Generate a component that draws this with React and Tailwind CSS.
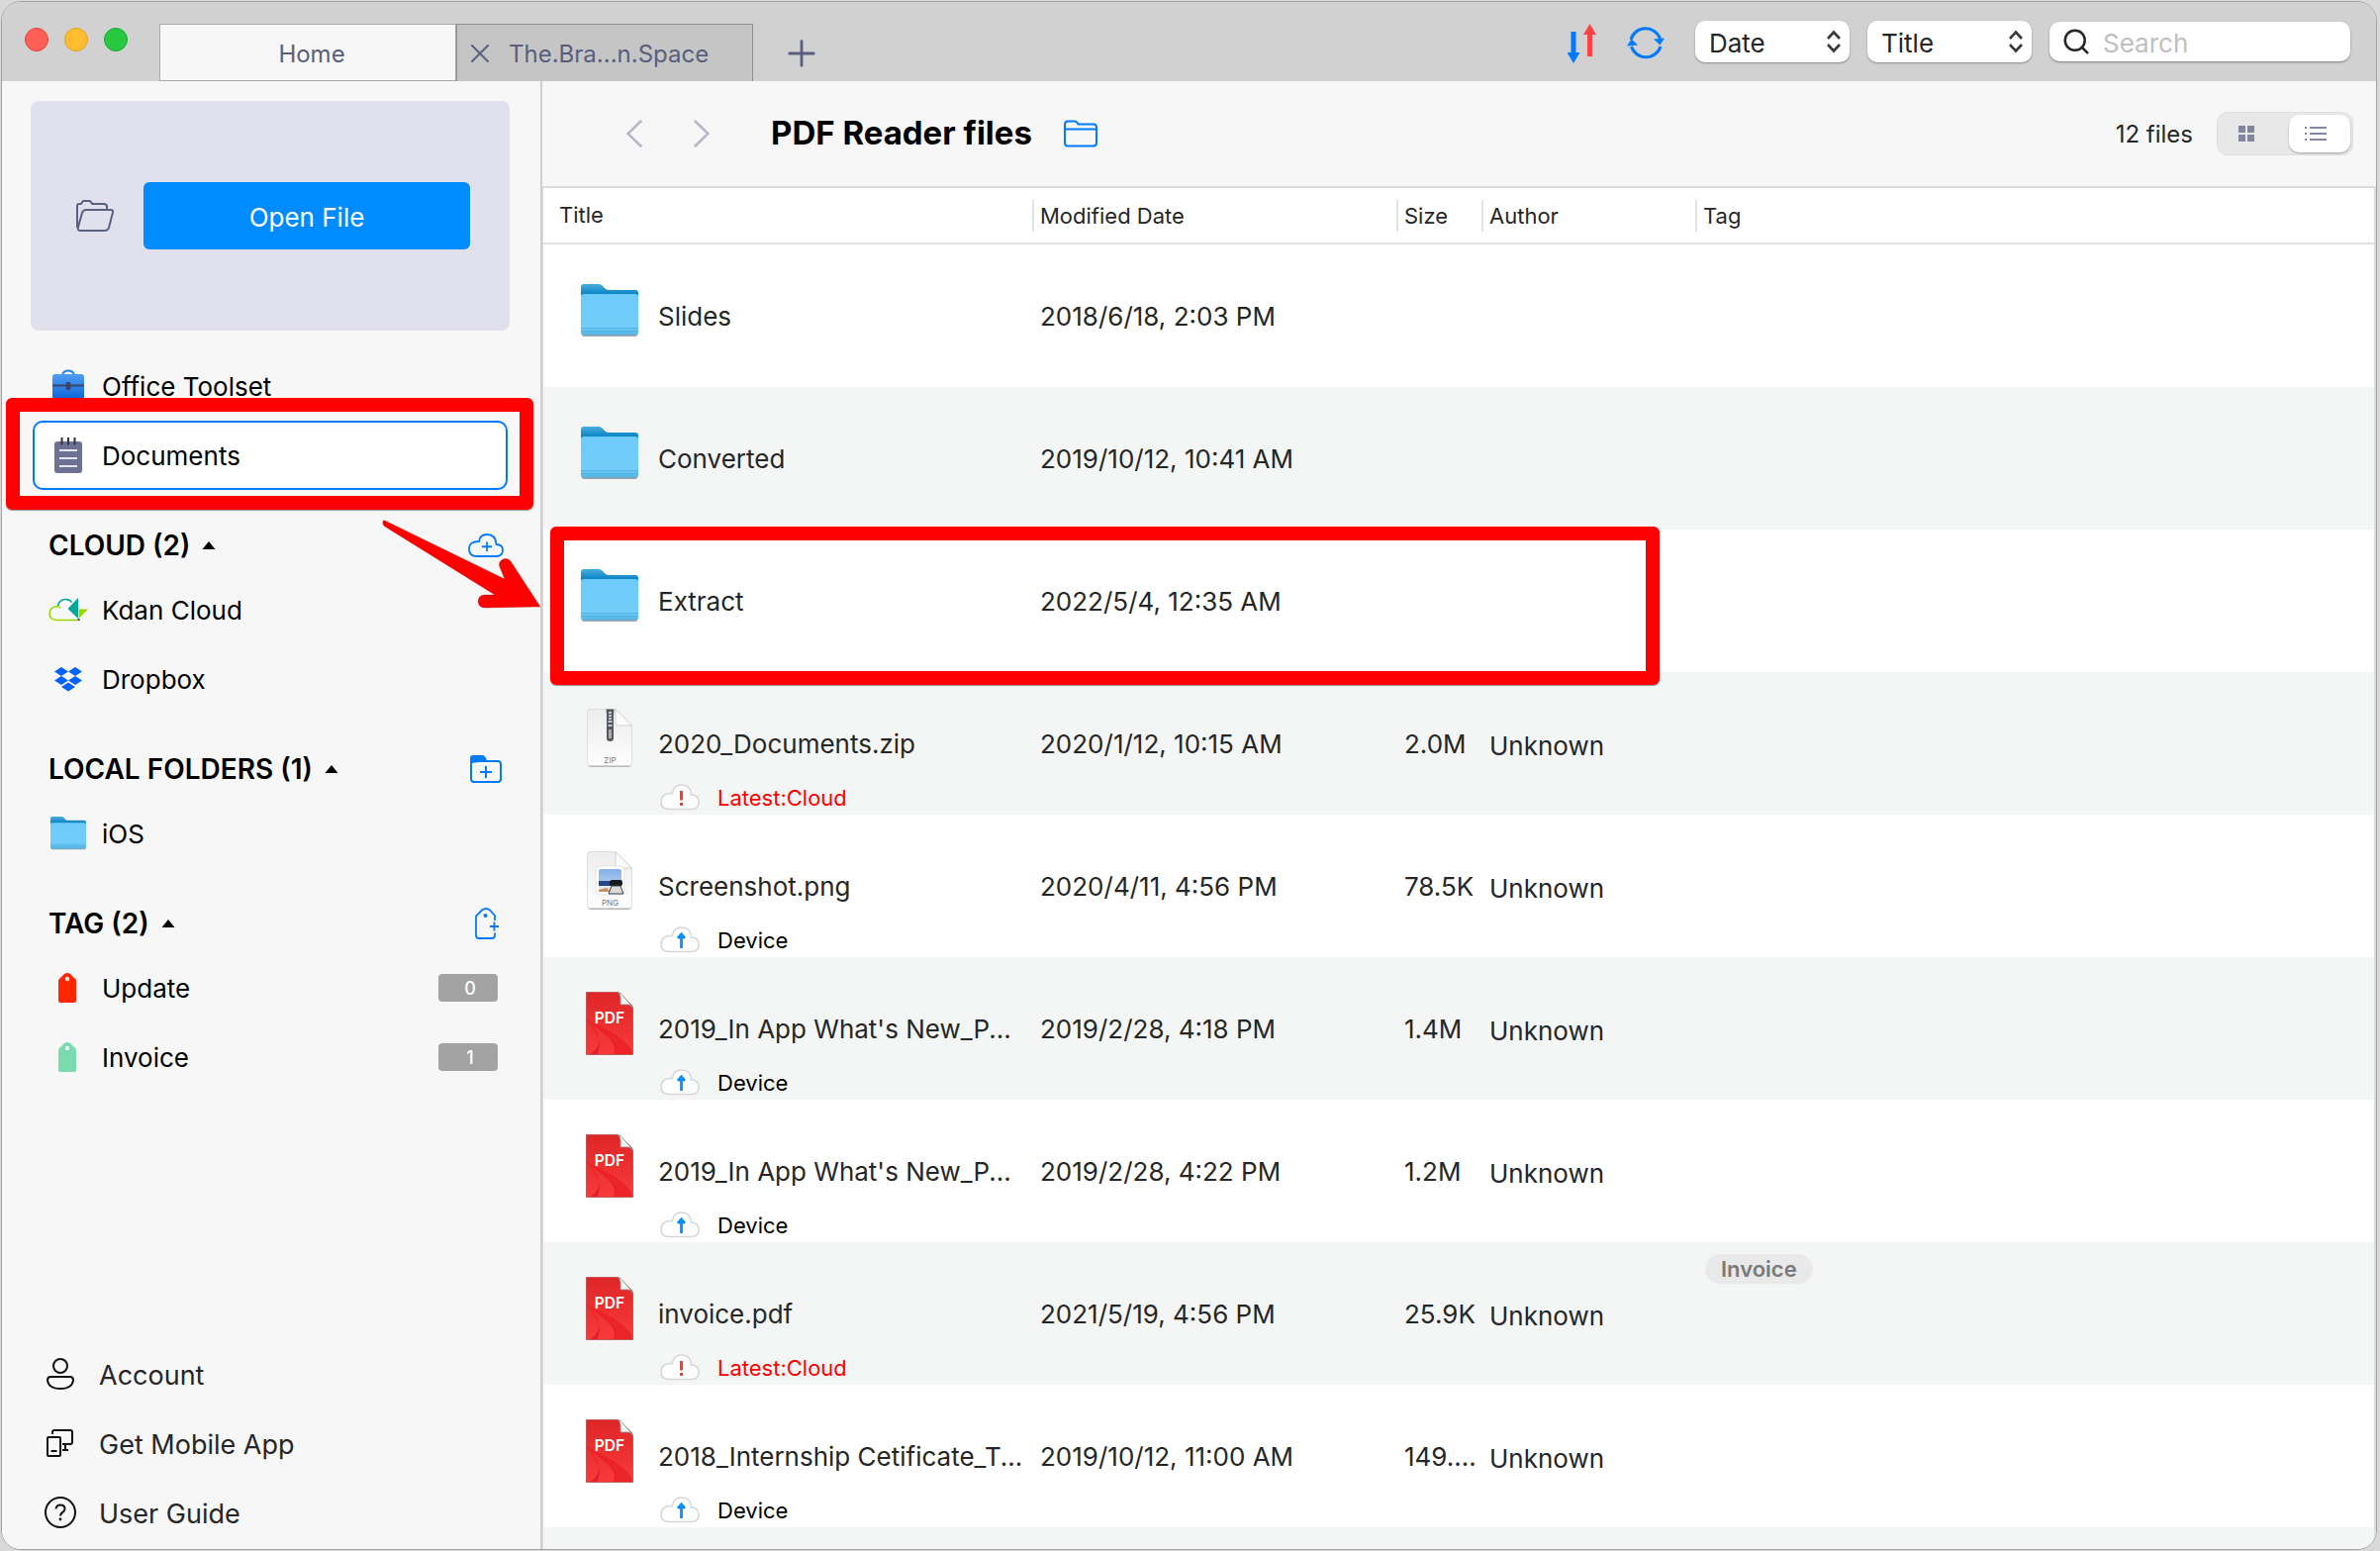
import React, { useState } from "react";
import { Plus, X, Search } from "lucide-react";

const FILES = [
  { name: "Slides",                          date: "2018/6/18, 2:03 PM",   kind: "folder" },
  { name: "Converted",                       date: "2019/10/12, 10:41 AM", kind: "folder" },
  { name: "Extract",                         date: "2022/5/4, 12:35 AM",   kind: "folder" },
  { name: "2020_Documents.zip",              date: "2020/1/12, 10:15 AM",  kind: "zip", size: "2.0M",   author: "Unknown", status: "cloud" },
  { name: "Screenshot.png",                  date: "2020/4/11, 4:56 PM",   kind: "png", size: "78.5K",  author: "Unknown", status: "device" },
  { name: "2019_In App What's New_P...",     date: "2019/2/28, 4:18 PM",   kind: "pdf", size: "1.4M",   author: "Unknown", status: "device" },
  { name: "2019_In App What's New_P...",     date: "2019/2/28, 4:22 PM",   kind: "pdf", size: "1.2M",   author: "Unknown", status: "device" },
  { name: "invoice.pdf",                     date: "2021/5/19, 4:56 PM",   kind: "pdf", size: "25.9K",  author: "Unknown", status: "cloud", tag: "Invoice" },
  { name: "2018_Internship Cetificate_T...", date: "2019/10/12, 11:00 AM", kind: "pdf", size: "149....", author: "Unknown", status: "device" },
];

/* ---------- icons ---------- */

function FolderIcon({ className }) {
  return (
    <svg viewBox="0 0 58 54" preserveAspectRatio="none" className={className} aria-hidden="true">
      <defs>
        <linearGradient id="folderBack" x1="0" y1="0" x2="0" y2="1">
          <stop offset="0" stopColor="#4bacdc" />
          <stop offset="0.25" stopColor="#0a84c6" />
        </linearGradient>
        <linearGradient id="folderFront" x1="0" y1="0" x2="0" y2="1">
          <stop offset="0" stopColor="#6ecbf9" />
          <stop offset="0.8" stopColor="#72cdfa" />
          <stop offset="1" stopColor="#4fb3e4" />
        </linearGradient>
      </defs>
      <rect x="0.5" y="40" width="57" height="13" rx="3" fill="#000" opacity="0.35" />
      <path d="M0 3Q0 0 3 0H18Q20 0 22 2L25 5Q26.500 6 29 6H55Q58 6 58 9V40H0Z" fill="url(#folderBack)" />
      <path d="M0 12.500Q0 10 3 10H55Q58 10 58 12.500V48Q58 51.500 54.500 51.500H3.500Q0 51.500 0 48Z" fill="url(#folderFront)" />
      <path d="M0 44.500H58M0 47.500H58" stroke="#4aaee0" strokeWidth="0.800" />
    </svg>
  );
}

function PdfIcon() {
  return (
    <svg width="48" height="64" viewBox="0 0 48 64" aria-hidden="true">
      <defs>
        <linearGradient id="pdfRed" x1="0" y1="0" x2="0" y2="1">
          <stop offset="0" stopColor="#df2626" />
          <stop offset="1" stopColor="#f83a3c" />
        </linearGradient>
      </defs>
      <path d="M0.500 0.500H32Q34.500 0.500 36 3L46 13Q47.500 15 47.500 17V63.500H0.500Z" fill="url(#pdfRed)" stroke="#b34a4a" strokeWidth="0.800" />
      <path d="M0.500 27C18 38 42 46 47 63H28C34 48 10 38 0.500 27Z" fill="#ee2026" />
      <path d="M0.500 27C14 42 18 54 5 63H11C18 52 10 40 0.500 27Z" fill="#dd2028" />
      <path d="M10 35C26 43 34 54 29 63H47C44 48 24 43 10 35Z" fill="#ea2429" />
      <path d="M32 0.500Q34.500 1 35 6V13H43Q47 13.500 47.500 17Q47 14 44 11.500L37 3.500Q35 0.500 32 0.500Z" fill="#f1f1f1" stroke="#8c8c8c" strokeWidth="0.800" />
      <text x="24" y="31.500" textAnchor="middle" fontFamily="Inter, sans-serif" fontSize="15.500" fontWeight="600" fill="#fff">PDF</text>
    </svg>
  );
}

function SheetIcon({ kind }) {
  return (
    <svg width="46" height="60" viewBox="0 0 46 60" aria-hidden="true">
      <defs>
        <linearGradient id="sky" x1="0" y1="0" x2="0" y2="1">
          <stop offset="0" stopColor="#86b0ea" />
          <stop offset="1" stopColor="#c3d8f4" />
        </linearGradient>
        <linearGradient id="paper" x1="0" y1="0" x2="0" y2="1">
          <stop offset="0" stopColor="#ededed" />
          <stop offset="1" stopColor="#fdfdfd" />
        </linearGradient>
      </defs>
      <path d="M3 2H29L45 18V56Q45 59 42 59H4Q1 59 1 56V4Q1 2 3 2Z" fill="#b5b5b5" />
      <path d="M3 0.500H29L45.500 17V55Q45.500 57.500 43 57.500H3Q0.500 57.500 0.500 55V3Q0.500 0.500 3 0.500Z" fill="url(#paper)" stroke="#d8d8d8" strokeWidth="0.800" />
      <path d="M29 0.500L45.500 17H32Q29 17 29 14Z" fill="#fbfbfb" stroke="#c9c9c9" strokeWidth="0.800" />
      {kind === "zip" ? (
        <g>
          <path d="M19.500 0.500H27.500L27 6V30Q27 33 23.500 33Q20 33 20 30V6Z" fill="#55595d" />
          <path d="M23.500 3V11" stroke="#d5dbe0" strokeWidth="2.500" strokeDasharray="2 1" />
          <path d="M21.500 13H25.500M21.500 17H25.500" stroke="#c2c8cc" strokeWidth="2" />
          <path d="M22 21H25V30H22Z" fill="#a9adb0" />
        </g>
      ) : (
        <g>
          <rect x="9" y="15" width="29" height="29" rx="5" fill="#fff" stroke="#dedede" strokeWidth="0.800" />
          <rect x="12" y="18" width="23" height="23" rx="2" fill="url(#sky)" />
          <path d="M12 30H35V35H12Z" fill="#24468b" />
          <path d="M12 35H35V40H12Z" fill="#e2eaf0" />
          <path d="M12 39L20 37L24 41H12Z" fill="#c98f62" />
          <rect x="23" y="29" width="13" height="6" rx="2.500" fill="#17191d" />
          <path d="M25 35H34L37 43H22Z" fill="#d9dadb" stroke="#3d3f42" strokeWidth="1" />
        </g>
      )}
      <text x="23.500" y="55" textAnchor="middle" fontFamily="Inter, sans-serif" fontSize="8" fill="#7a7a7a">
        {kind === "zip" ? "ZIP" : "PNG"}
      </text>
    </svg>
  );
}

function StatusCloud({ status }) {
  return (
    <svg width="40" height="28" viewBox="0 1 40 28" aria-hidden="true">
      <path
        d="M9 26.500H32Q39 26.500 39 19Q39 12.500 31.500 12Q31 2 21.500 2Q13.500 2 12.500 10.500Q1 10 1 19Q1 26.500 9 26.500Z"
        fill="#fff" stroke="#d6d6d6" strokeWidth="1.500"
      />
      {status === "cloud" ? (
        <path d="M21.500 8V17.500M21.500 20V23" stroke="#ff3b30" strokeWidth="3" />
      ) : (
        <path d="M21.500 23V9M18 13L21.500 9L25 13" fill="none" stroke="#0a8cff" strokeWidth="2.800" />
      )}
    </svg>
  );
}

function ToolsetIcon() {
  return (
    <svg width="32" height="34" viewBox="0 0 32 34" aria-hidden="true">
      <defs>
        <linearGradient id="case" x1="0" y1="0" x2="0" y2="1">
          <stop offset="0" stopColor="#4f9df5" />
          <stop offset="1" stopColor="#0a63d8" />
        </linearGradient>
      </defs>
      <path d="M10 6Q11 1.500 16 1.500Q21 1.500 22 6" fill="none" stroke="#1a86f0" strokeWidth="2" />
      <rect x="0" y="5" width="32" height="26" rx="3" fill="url(#case)" />
      <path d="M0 16.500H32" stroke="#3c4468" strokeWidth="2" />
      <rect x="13.500" y="13" width="5" height="8" rx="2" fill="#3c4468" />
    </svg>
  );
}

function NotepadIcon() {
  return (
    <svg width="28" height="36" viewBox="0 0 28 36" aria-hidden="true">
      <rect x="0" y="4" width="28" height="32" rx="3" fill="#6d7294" />
      <path d="M7.500 0V7.500M14 0V7.500M20.500 0V7.500" stroke="#2f3242" strokeWidth="2" />
      <path d="M5 13H23M5 21H23M5 29H23" stroke="#e4e5ee" strokeWidth="2" />
    </svg>
  );
}

function KdanIcon() {
  return (
    <svg width="40" height="24" viewBox="0 0 40 24" fill="none" aria-hidden="true">
      <path d="M29 22.500H8Q1 22 1 15.500Q1.500 9 9 8.500Q11.500 9 12 10.500" stroke="#97d700" strokeWidth="1.600" />
      <path d="M9.500 8Q11 1.500 17.500 1.500Q21.500 1.500 23.500 4.500" stroke="#00a79d" strokeWidth="1.600" />
      <path d="M19.500 11L30 0V21Z" fill="#00a79d" />
      <path d="M31 11.500H40L31 20.500Z" fill="#97d700" />
      <circle cx="30.500" cy="22" r="1.300" fill="#555" />
    </svg>
  );
}

function DropboxIcon() {
  return (
    <svg width="28" height="25" viewBox="0 0 28 25" fill="#0061ff" aria-hidden="true">
      <path d="M7 0L14 4.500L7 9L0 4.500ZM21 0L28 4.500L21 9L14 4.500ZM7 9L14 13.500L7 18L0 13.500ZM21 9L28 13.500L21 18L14 13.500ZM14 15.500L21 20L14 24.500L7 20Z" />
    </svg>
  );
}

function TagIcon({ color }) {
  return (
    <svg width="20" height="32" viewBox="0 0 20 32" aria-hidden="true">
      <path d="M0 8L6 2Q9 0 12 2L18 8V29Q18 31 16 31H2Q0 31 0 29Z" fill={color} />
      <circle cx="9" cy="7" r="2.200" fill="#fff" opacity="0.85" />
    </svg>
  );
}

function CloudPlusIcon() {
  return (
    <svg width="36" height="24" viewBox="0 0 36 24" fill="none" stroke="#007aff" strokeWidth="1.800" aria-hidden="true">
      <path d="M8 23H29Q35 22.500 35 16.500Q35 11.500 28.500 11Q28 1 19 1Q12 1 11 8Q1 8 1 15.500Q1 22.500 8 23Z" />
      <path d="M19 8.500V18M14 13.250H24" />
    </svg>
  );
}

function FolderPlusIcon() {
  return (
    <svg width="32" height="28" viewBox="0 0 32 28" fill="none" stroke="#007aff" strokeWidth="2" aria-hidden="true">
      <rect x="1" y="6" width="30" height="21" rx="3" />
      <path d="M1 7V3Q1 1 3 1H13Q14 1 16 5.500Z" fill="#007aff" />
      <path d="M16 11V23M10 17H22" />
    </svg>
  );
}

function TagPlusIcon() {
  return (
    <svg width="26" height="32" viewBox="-2 0 26 32" fill="none" stroke="#007aff" strokeWidth="1.800" aria-hidden="true">
      <path d="M20 13V8L15 2.500Q11 -0.500 7 2.500L1 8.500V28Q1 31 4 31H17Q20 31 20 28V25.500" />
      <circle cx="10.500" cy="8" r="2" fill="#007aff" stroke="none" />
      <path d="M19.500 14.500V23.500M15 19H24" />
    </svg>
  );
}

function OpenFolderIcon() {
  return (
    <svg width="38" height="32" viewBox="0 0 38 32" fill="none" stroke="#5c6080" strokeWidth="2" strokeLinejoin="round" aria-hidden="true">
      <path d="M1 28V6Q1 4 3 4H5L7 1H13Q15 1 16 4H28Q31 4 31 7V10" />
      <path d="M10 10H35Q37.500 10 37 12.500L33 28Q32 31 29 31H4Q1 31 2 27.500L6 13Q7 10 10 10Z" />
    </svg>
  );
}

function OutlineFolderIcon() {
  return (
    <svg width="34" height="28" viewBox="0 0 34 28" fill="none" stroke="#007aff" strokeWidth="2" aria-hidden="true">
      <path d="M1 5Q1 1.500 4 1.500H11Q13 1.500 14.500 4.500H30Q33 4.500 33 7.500V23.500Q33 26.500 30 26.500H4Q1 26.500 1 23.500Z" />
      <path d="M1 9.500H33" />
    </svg>
  );
}

function ChevronIcon({ right }) {
  return (
    <svg width="16" height="28" viewBox="0 0 16 28" fill="none" stroke="#b5b6c6" strokeWidth="2.500" strokeLinecap="round" aria-hidden="true">
      <path d={right ? "M1.500 1.500L14.500 14L1.500 26.500" : "M14.500 1.500L1.500 14L14.500 26.500"} />
    </svg>
  );
}

function SortArrowsIcon() {
  return (
    <svg width="32" height="42" viewBox="0 0 32 42" aria-hidden="true">
      <path d="M4.500 9H9.500V30H13.500L7 41L0.500 30H4.500Z" fill="#007aff" />
      <path d="M21 34H26V12H30L23.500 1L17 12H21Z" fill="#ff4245" />
    </svg>
  );
}

function RefreshIcon() {
  return (
    <svg width="40" height="36" viewBox="0 0 40 36" fill="none" stroke="#007aff" strokeWidth="3" aria-hidden="true">
      <path d="M5 15A15.500 15.500 0 0 1 34.500 14" />
      <path d="M35 22A15.500 15.500 0 0 1 5.500 22" />
      <path d="M28 14.500L39 13.500L34.500 20.500Z M12 20.500L1 21.500L5.500 14.500Z" fill="#007aff" stroke="none" />
    </svg>
  );
}

function UserIcon() {
  return (
    <svg width="32" height="32" viewBox="0 0 32 32" fill="none" stroke="#111" strokeWidth="2" aria-hidden="true">
      <circle cx="16" cy="8" r="7" />
      <path d="M6 19H26Q29 19 29 22.500Q28 31 16 31Q4 31 3 22.500Q3 19 6 19Z" />
    </svg>
  );
}

function DevicesIcon() {
  return (
    <svg width="32" height="28" viewBox="0 0 32 28" fill="none" stroke="#111" strokeWidth="2" aria-hidden="true">
      <path d="M8 5V3Q8 1 10 1H26Q28 1 28 3V13Q28 15 26 15H18" />
      <path d="M21 15V21M18 21H24" />
      <rect x="3" y="8" width="13" height="19" rx="1" />
      <path d="M6.500 22H12.500" />
    </svg>
  );
}

function HelpIcon() {
  return (
    <svg width="32" height="32" viewBox="0 0 32 32" fill="none" stroke="#111" strokeWidth="2" aria-hidden="true">
      <circle cx="16" cy="16" r="15" />
      <path d="M11.500 12.500Q12 8.500 16 8.500Q20.500 8.500 20.500 12.500Q20.500 14.500 18 16.200Q16 17.500 16 19.500" />
      <circle cx="16" cy="23" r="1.400" fill="#111" stroke="none" />
    </svg>
  );
}

/* ---------- small pieces ---------- */

function FileIcon({ kind }) {
  if (kind === "folder") return <FolderIcon className="w-[58px] h-[54px]" />;
  if (kind === "pdf") return <PdfIcon />;
  return <SheetIcon kind={kind} />;
}

function Dropdown({ label, value, options, onChange, className }) {
  return (
    <div className={"relative h-[42px] " + className}>
      <select
        aria-label={label}
        value={value}
        onChange={(e) => onChange(e.target.value)}
        className="w-full h-full pl-[14px] pr-8 pt-0.5 appearance-none bg-white rounded-[10px] text-[26px] text-[#262626] shadow-[0_1px_2px_rgba(0,0,0,0.35)] focus:outline-none"
      >
        {options.map((o) => <option key={o}>{o}</option>)}
      </select>
      <svg width="16" height="24" viewBox="0 0 16 24" fill="none" stroke="#3a3a3a" strokeWidth="2.600" className="absolute right-2 top-[9px] pointer-events-none" aria-hidden="true">
        <path d="M2 9L8 2.500L14 9M2 15L8 21.500L14 15" />
      </svg>
    </div>
  );
}

function SideItem({ icon, label, count, active }) {
  return (
    <li className="relative">
      <a
        href="#"
        className={
          "flex items-center gap-[14px] h-[70px] pl-[14px] pr-2 border-2 rounded-[10px] text-[26px] text-black " +
          (active ? "bg-white border-[#007aff]" : "border-transparent")
        }
      >
        <span className="w-10 flex justify-center flex-shrink-0">{icon}</span>
        <span className="flex-1">{label}</span>
        {count !== undefined && (
          <span className="w-[60px] h-7 pl-1 pt-px leading-7 rounded bg-[#a3a3a3] text-white text-[18px] font-medium text-center">{count}</span>
        )}
      </a>
      {active && (
        <div className="absolute z-10 -top-[23px] -bottom-[20px] -left-[27px] -right-[26px] border-[14px] border-[#ff0000] rounded-md shadow-[0_1px_1px_rgba(0,0,0,0.4)] pointer-events-none" />
      )}
    </li>
  );
}

function Section({ title, action, actionLabel, children }) {
  return (
    <section className="pt-[26px]">
      <div className="h-[60px] pl-4 pr-1 flex items-center">
        <h2 className="text-[28px] font-semibold text-black">{title}</h2>
        <svg width="14" height="8" viewBox="0 0 14 8" className="ml-3" aria-hidden="true">
          <path d="M7 0L13.500 8H0.500Z" fill="#000" />
        </svg>
        <button aria-label={actionLabel} className="ml-auto w-9 flex justify-center">{action}</button>
      </div>
      <ul>{children}</ul>
    </section>
  );
}

function FooterLink({ icon, label }) {
  return (
    <li>
      <a href="#" className="flex items-center gap-[23px] h-[70px] pl-[14px] text-[27px] text-[#262626]">
        <span className="w-8 flex justify-center">{icon}</span>
        <span className="pt-1">{label}</span>
      </a>
    </li>
  );
}

function HeadCell({ children }) {
  return (
    <th className="p-0 text-left font-normal">
      <div className="h-8 leading-8 pl-1.5 border-l-2 border-[#e2e2e2]">{children}</div>
    </th>
  );
}

/* ---------- layout ---------- */

function TitleBar() {
  const [sortBy, setSortBy] = useState("Date");
  const [searchIn, setSearchIn] = useState("Title");
  const [query, setQuery] = useState("");

  return (
    <header className="flex h-20 bg-[#d1d1d1] flex-shrink-0">
      <div className="flex items-center gap-4 pl-[23px] w-[159px] pb-1">
        <button aria-label="Close" className="w-6 h-6 rounded-full bg-[#ff5f57] border border-[#e0443e]" />
        <button aria-label="Minimize" className="w-6 h-6 rounded-full bg-[#febc2e] border border-[#dea123]" />
        <button aria-label="Zoom" className="w-6 h-6 rounded-full bg-[#28c840] border border-[#1aab29]" />
      </div>

      {/* Tabs */}
      <div className="flex items-end text-[24px] text-[#5a5e7e]">
        <button className="w-[300px] h-[58px] pl-2 pt-1 bg-[#f7f7f7] border border-[#a9a9a9]">Home</button>
        <div className="w-[300px] h-[58px] flex items-center bg-[#c5c5c5] border border-b-0 border-[#8f8f8f] pl-[7px]">
          <button aria-label="Close tab"><X size={32} strokeWidth={1.5} /></button>
          <button className="flex-1 text-left pl-[13px] pt-0.5">The.Bra...n.Space</button>
        </div>
        <button aria-label="New tab" className="ml-7 w-[42px] h-[58px] pt-0.5 flex items-center justify-center">
          <Plus size={42} strokeWidth={1.6} />
        </button>
      </div>

      {/* Toolbar */}
      <div className="ml-auto flex items-center pr-[26px]">
        <button aria-label="Sort order" className="pt-1"><SortArrowsIcon /></button>
        <button aria-label="Refresh" className="ml-7 mr-[30px] pt-0.5"><RefreshIcon /></button>
        <Dropdown label="Sort by" value={sortBy} options={["Date", "Name", "Size"]} onChange={setSortBy} className="w-[156px] mr-[18px]" />
        <Dropdown label="Search in" value={searchIn} options={["Title", "Tag"]} onChange={setSearchIn} className="w-[166px] mr-[18px]" />
        <label className="flex items-center w-[304px] h-10 bg-white rounded-[10px] pl-3 shadow-[0_1px_2px_rgba(0,0,0,0.4)]">
          <Search size={30} strokeWidth={2} className="text-[#262626] flex-shrink-0" />
          <input
            aria-label="Search"
            value={query}
            onChange={(e) => setQuery(e.target.value)}
            placeholder="Search"
            className="min-w-0 flex-1 pl-3 pt-0.5 text-[26px] placeholder:text-[#bfbfbf] focus:outline-none"
          />
        </label>
      </div>
    </header>
  );
}

function Sidebar() {
  return (
    <aside className="w-[546px] flex-shrink-0 flex flex-col bg-[#f7f7f7] border-r-2 border-[#cfcfcf] pl-[29px] pr-[31px] pb-0.5">
      <div className="mt-5 h-[232px] rounded-lg bg-[#e1e1ee] flex items-center pl-[46px] pr-10 gap-[30px]">
        <OpenFolderIcon />
        <button className="flex-1 h-[68px] pt-0.5 rounded-md bg-[#008cff] text-white text-[26px]">Open File</button>
      </div>

      <nav className="mt-[21px] px-0.5">
        <ul>
          <SideItem icon={<ToolsetIcon />} label="Office Toolset" />
          <SideItem icon={<NotepadIcon />} label="Documents" active />
        </ul>
        <Section title="CLOUD (2)" action={<CloudPlusIcon />} actionLabel="Add cloud">
          <SideItem icon={<KdanIcon />} label="Kdan Cloud" />
          <SideItem icon={<DropboxIcon />} label="Dropbox" />
        </Section>
        <Section title="LOCAL FOLDERS (1)" action={<FolderPlusIcon />} actionLabel="Add folder">
          <SideItem icon={<FolderIcon className="w-9 h-[34px]" />} label="iOS" />
        </Section>
        <Section title="TAG (2)" action={<TagPlusIcon />} actionLabel="Add tag">
          <SideItem icon={<TagIcon color="#ff2600" />} label="Update" count={0} />
          <SideItem icon={<TagIcon color="#7adbb0" />} label="Invoice" count={1} />
        </Section>
      </nav>

      <ul className="mt-auto">
        <FooterLink icon={<UserIcon />} label="Account" />
        <FooterLink icon={<DevicesIcon />} label="Get Mobile App" />
        <FooterLink icon={<HelpIcon />} label="User Guide" />
      </ul>
    </aside>
  );
}

function FileRow({ file, striped }) {
  return (
    <tr className={striped ? "bg-[#f4f6f5]" : "bg-white"}>
      <td className="p-0 align-top">
        <div className="flex h-36 pl-[38px] gap-5">
          <div className="w-[58px] h-[134px] flex items-center justify-center flex-shrink-0">
            <FileIcon kind={file.kind} />
          </div>
          <div className="pt-[57px] whitespace-nowrap">
            <div className="leading-8">{file.name}</div>
            {file.status && (
              <div className="mt-6 h-7 flex items-center gap-[18px] pl-0.5 text-[22px]">
                <StatusCloud status={file.status} />
                {file.status === "cloud"
                  ? <span className="text-[#ff0000]">Latest:Cloud</span>
                  : <span className="text-black">Device</span>}
              </div>
            )}
          </div>
        </div>
      </td>
      <td className="p-0 pl-2 pt-[57px] align-top leading-8">{file.date}</td>
      <td className="p-0 pl-2 pt-[57px] align-top leading-8">{file.size}</td>
      <td className="p-0 pl-2 pt-[59px] align-top leading-8">{file.author}</td>
      <td className="p-0 pl-2.5 pt-3 align-top">
        {file.tag && (
          <div className="w-fit px-4 h-[30px] leading-[30px] rounded-full bg-[#e9e9e9] text-[#7a7a7a] text-[22px] font-semibold">{file.tag}</div>
        )}
      </td>
    </tr>
  );
}

export default function App() {
  const [view, setView] = useState("list");

  return (
    <div className="min-h-screen flex bg-[#d9d9d9] p-px pr-[3px] font-[Inter,sans-serif]">
      <div className="flex-1 flex flex-col rounded-[20px] overflow-hidden border border-[#a3a3a3] bg-[#f7f7f7]">
        <TitleBar />

        <div className="relative flex-1 flex">
          <Sidebar />

          <main className="flex-1 min-w-0 flex flex-col">
            <div className="flex items-center h-[106px] pl-[85px] pr-[23px]">
              <button aria-label="Back"><ChevronIcon /></button>
              <button aria-label="Forward" className="ml-[52px]"><ChevronIcon right /></button>
              <h1 className="ml-[62px] text-[33px] font-bold text-black whitespace-nowrap">PDF Reader files</h1>
              <button aria-label="Show folder" className="ml-8"><OutlineFolderIcon /></button>

              <span className="ml-auto mr-6 pt-0.5 text-[24px] text-[#262626]">12 files</span>
              <div className="flex w-[138px] h-11 p-0.5 rounded-[11px] bg-[#e8e8e8] border border-[#dedede] text-[#84869f]">
                <button aria-label="Grid view" onClick={() => setView("grid")} className={"flex-1 flex items-center justify-center rounded-[10px] pr-4 " + (view === "grid" ? "bg-white" : "")}>
                  <svg width="16" height="16" viewBox="0 0 16 16" fill="currentColor" aria-hidden="true">
                    <path d="M0 0H7V7H0ZM9 0H16V7H9ZM0 9H7V16H0ZM9 9H16V16H9Z" />
                  </svg>
                </button>
                <button aria-label="List view" onClick={() => setView("list")} className={"flex-1 flex items-center justify-center rounded-[10px] pr-2 " + (view === "list" ? "bg-white shadow-[0_1px_2px_rgba(0,0,0,0.3)]" : "")}>
                  <svg width="22" height="16" viewBox="0 0 22 16" stroke="currentColor" strokeWidth="1.800" aria-hidden="true">
                    <path d="M0 2H2M5 2H22M0 8H2M5 8H22M0 14H2M5 14H22" />
                  </svg>
                </button>
              </div>
            </div>

            <div className="flex-1 flex flex-col border-t-2 border-l border-r-2 border-[#dcdcdc] bg-white">
              <table className="w-full table-fixed border-collapse text-[26px] text-[#262626]">
                <colgroup>
                  <col className="w-[494px]" />
                  <col className="w-[368px]" />
                  <col className="w-[86px]" />
                  <col className="w-[216px]" />
                  <col />
                </colgroup>
                <thead className="text-[22px]">
                  <tr className="h-14 border-b-2 border-[#e2e2e2]">
                    <th className="p-0 pl-4 text-left font-normal">Title</th>
                    <HeadCell>Modified Date</HeadCell>
                    <HeadCell>Size</HeadCell>
                    <HeadCell>Author</HeadCell>
                    <HeadCell>Tag</HeadCell>
                  </tr>
                </thead>
                <tbody>
                  {FILES.map((file, i) => <FileRow key={i} file={file} striped={i % 2 === 1} />)}
                </tbody>
              </table>
              <div className="flex-1 bg-[#f4f6f5]" />
            </div>
          </main>

          {/* Callouts */}
          <div className="absolute left-[554px] top-[450px] w-[1121px] h-[160px] border-[14px] border-[#ff0000] rounded-md shadow-[0_1px_1px_rgba(0,0,0,0.4)] pointer-events-none" />
          <svg width="168" height="96" viewBox="0 0 168 96" className="absolute left-[382px] top-[443px] pointer-events-none" aria-hidden="true">
            <path
              d="M3 2Q2 5 5 7L116 76L105 76Q99 77 99 83Q100 89 106 89L162 88L132 42Q129 38 124 40Q119 43 121 48L126 60L5 1Q3 0 3 2Z"
              fill="#ff0000" stroke="#8a2020" strokeOpacity="0.35" strokeWidth="0.800"
            />
          </svg>
        </div>
      </div>
    </div>
  );
}
